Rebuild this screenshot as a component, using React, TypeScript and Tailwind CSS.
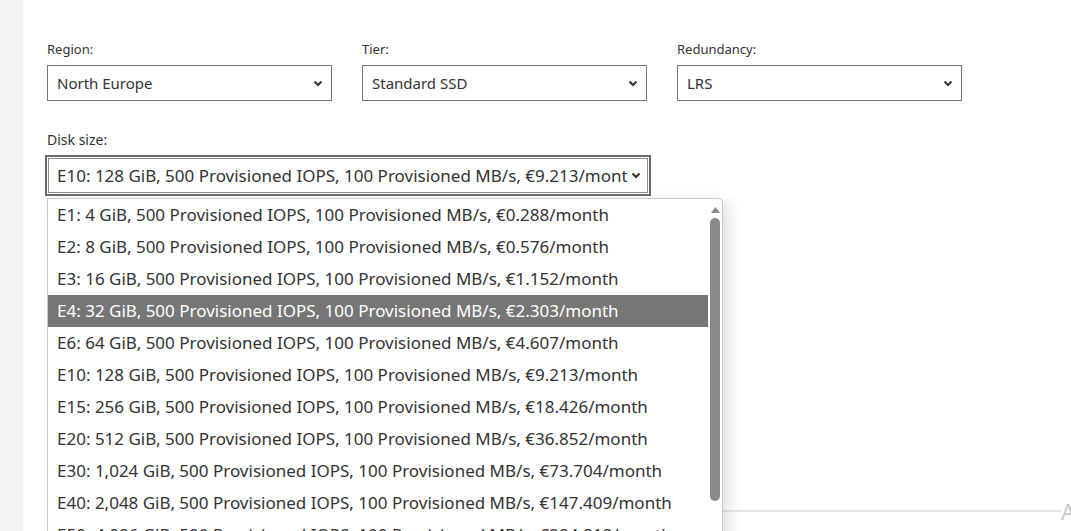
import React from "react";

const options = [
  "E1: 4 GiB, 500 Provisioned IOPS, 100 Provisioned MB/s, €0.288/month",
  "E2: 8 GiB, 500 Provisioned IOPS, 100 Provisioned MB/s, €0.576/month",
  "E3: 16 GiB, 500 Provisioned IOPS, 100 Provisioned MB/s, €1.152/month",
  "E4: 32 GiB, 500 Provisioned IOPS, 100 Provisioned MB/s, €2.303/month",
  "E6: 64 GiB, 500 Provisioned IOPS, 100 Provisioned MB/s, €4.607/month",
  "E10: 128 GiB, 500 Provisioned IOPS, 100 Provisioned MB/s, €9.213/month",
  "E15: 256 GiB, 500 Provisioned IOPS, 100 Provisioned MB/s, €18.426/month",
  "E20: 512 GiB, 500 Provisioned IOPS, 100 Provisioned MB/s, €36.852/month",
  "E30: 1,024 GiB, 500 Provisioned IOPS, 100 Provisioned MB/s, €73.704/month",
  "E40: 2,048 GiB, 500 Provisioned IOPS, 100 Provisioned MB/s, €147.409/month",
  "E50: 4,096 GiB, 500 Provisioned IOPS, 100 Provisioned MB/s, €294.818/month",
];

const Chevron = () => (
  <svg width="10" height="7" viewBox="0 0 10 7" className="shrink-0">
    <path d="M1.5 1.5 L5 5 L8.5 1.5" fill="none" stroke="#333" strokeWidth="2" />
  </svg>
);

interface FieldProps {
  label: string;
  value: string;
}

const Field: React.FC<FieldProps> = ({ label, value }) => (
  <div className="flex w-[285px] flex-col">
    <label className="mb-[7px] text-[13px] leading-[18px] text-[#333]">{label}</label>
    <div className="flex h-[36px] items-center justify-between border border-[#767676] bg-white pl-[9px] pr-[8px] text-[15px] text-[#333]">
      <span>{value}</span>
      <Chevron />
    </div>
  </div>
);

export default function App() {
  const [selected] = React.useState(3);

  return (
    <div
      className="flex h-[531px] w-[1071px] overflow-hidden bg-white"
      style={{ fontFamily: "'Noto Sans', 'Open Sans', sans-serif" }}
    >
      <div className="w-[23px] shrink-0 bg-[#f3f3f4]" />
      <div className="relative flex flex-1 flex-col pl-[24px] pt-[40px]">
        <div className="flex gap-[30px]">
          <Field label="Region:" value="North Europe" />
          <Field label="Tier:" value="Standard SSD" />
          <Field label="Redundancy:" value="LRS" />
        </div>

        <div className="mt-[30px] flex flex-col">
          <label className="mb-[6px] text-[14px] leading-[18px] text-[#333]">Disk size:</label>
          <div className="relative -ml-[2px] w-[606px]">
            <div className="border-2 border-[#6b6b6b] bg-white p-[1px]">
              <div className="flex h-[35px] items-center justify-between border border-[#8a8a8a] pl-[8px] pr-[6px] text-[17px] text-[#333]">
                <span className="overflow-hidden whitespace-nowrap">
                  E10: 128 GiB, 500 Provisioned IOPS, 100 Provisioned MB/s, €9.213/mont
                </span>
                <Chevron />
              </div>
            </div>

            {/* open option list */}
            <div className="absolute left-[2px] top-[43px] z-10 w-[676px] rounded-tr-[5px] border border-[#c8c8c8] bg-white shadow-[6px_4px_14px_rgba(0,0,0,0.12)]">
              <div className="flex">
                <div className="flex-1 overflow-hidden">
                  {options.map((o, i) => (
                    <div
                      key={o}
                      className={
                        "flex h-[32px] items-center whitespace-nowrap pl-[9px] text-[17px] " +
                        (i === selected ? "bg-[#767676] text-white" : "text-[#333]")
                      }
                    >
                      {o}
                    </div>
                  ))}
                </div>
                <div className="flex w-[14px] flex-col items-center pt-[8px]">
                  <svg width="9" height="6" viewBox="0 0 9 6">
                    <path d="M4.5 0 L9 6 L0 6 Z" fill="#8a8a8a" />
                  </svg>
                  <div className="mt-[5px] h-[283px] w-[10px] rounded-full bg-[#8a8a8a]" />
                </div>
              </div>
            </div>
          </div>
        </div>

        {/* field partly hidden by the list */}
        <div className="mt-[188px] h-[36px] w-[285px] border border-[#767676]" />

        <div className="mt-auto mb-[19px] flex items-end">
          <div className="h-[2px] flex-1 bg-[#e6e6e6]" />
          <span className="-mb-[10px] w-[10px] text-[22px] leading-none text-[#c8c8c8]">A</span>
        </div>
      </div>
    </div>
  );
}
